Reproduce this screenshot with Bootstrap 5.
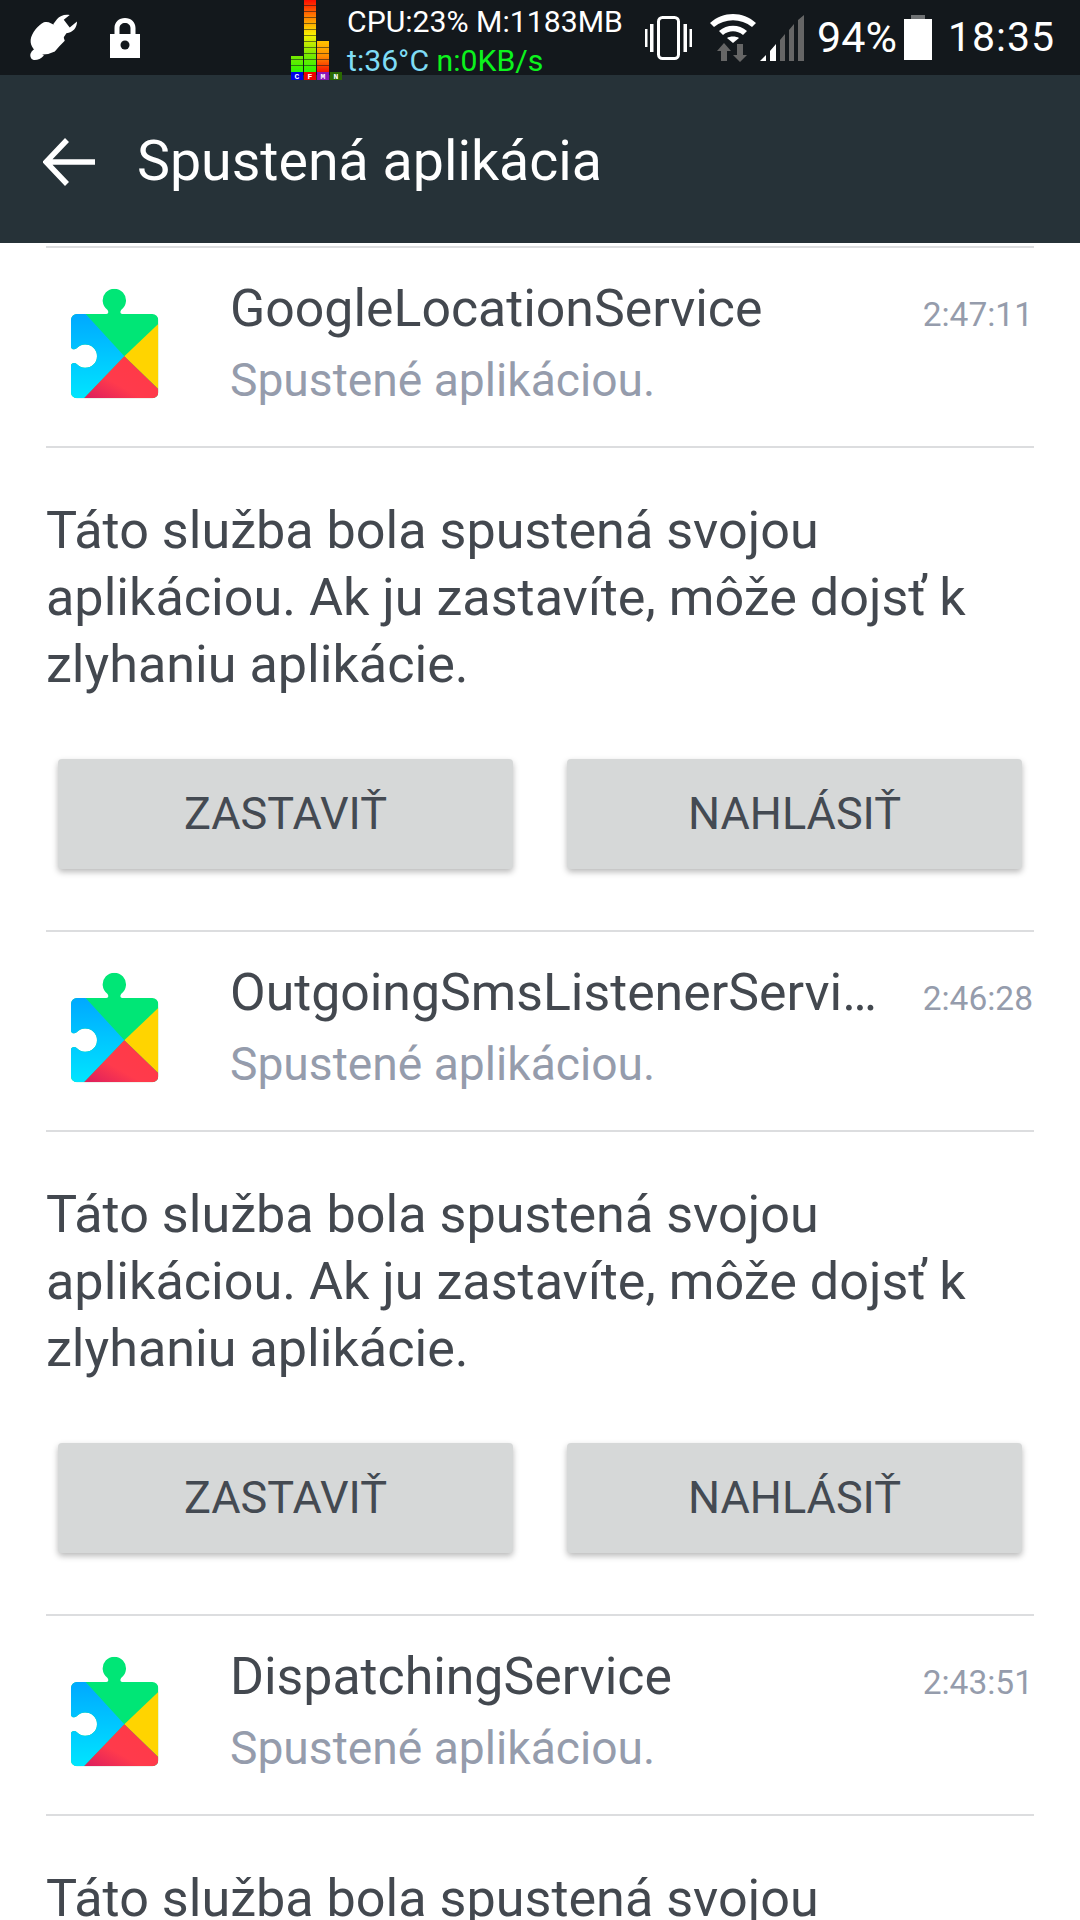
<!DOCTYPE html>
<html lang="sk">
<head>
<meta charset="utf-8">
<title>Spustená aplikácia</title>
<link rel="stylesheet" href="https://cdn.jsdelivr.net/npm/bootstrap@5.3.0/dist/css/bootstrap.min.css">
<style>
html,body{width:1080px;height:1920px;overflow:hidden;background:#fff}
body{font-family:Roboto,"Liberation Sans",sans-serif;color:#444a52}
.sbar{height:75px;background:#13181c;color:#fff;position:relative;padding-left:29px}
.sleft{gap:32px}
.eq{position:absolute;left:291px;top:0;width:52px;height:81px;z-index:2}
.stats{position:absolute;left:347px;top:2px;font-size:30.2px;line-height:39px;white-space:nowrap}
.tcol{color:#7fdcf5}.ncol{color:#0cf31c}
.sright{position:absolute;right:25px;top:0;height:75px}
.pct{font-size:43px;line-height:75px;margin-left:13px}
.clock{font-size:41px;line-height:75px;letter-spacing:1px;margin-left:15.5px}
.vib{margin-right:17.5px}
.sig{margin-left:4.5px}
.bat{margin-left:7.5px}
.abar{height:168px;background:#263238;color:#fff;padding:5px 0 0 43px}
.abar h1{font-size:55.5px;font-weight:400;margin:0 0 0 40px;line-height:1;color:#fff}
.screen{padding:3px 46px 0 46px}
.hr{height:2px;background:#dcdddf}
.srow{height:198px}
.ico{width:140px;height:150px;margin:20.5px 50px 0 -6px;flex:none;align-self:flex-start}
.smain{min-width:0;flex:1 1 auto;align-self:flex-start;padding-top:29px}
.sname{font-size:51.8px;line-height:64px;color:#43484f;white-space:nowrap}
.ssub{font-size:46.2px;line-height:56px;color:#959cac;margin-top:11px}
.stime{font-size:33.5px;color:#959cac;flex:none;align-self:flex-start;margin:47px 1px 0 42px;line-height:40px}
.desc{font-size:52.15px;line-height:67px;color:#43484f;margin:0;padding-top:49px}
.btnrow{padding:61px 12px 0;gap:54px}
.gbtn{flex:1 1 0;height:110px;background:#d6d8d8;border:0;border-radius:4px;font-size:45px;color:#444a52;box-shadow:0 3px 6px rgba(0,0,0,.28);padding:0}
.gap{height:61px}
</style>
</head>
<body>
<svg width="0" height="0" class="position-absolute">
<defs>
<clipPath id="pz"><path d="M111 135H199C205 135 207 128 202 122A35 35 0 1 1 244 122C239 128 241 135 247 135H337A18 18 0 0 1 355 153V370A18 18 0 0 1 337 388H111A18 18 0 0 1 93 370V290C93 282 104 280 110 285A35 35 0 1 0 110 238C104 243 93 241 93 233V153A18 18 0 0 1 111 135Z"/></clipPath>
<linearGradient id="gb" x1="0" y1="0" x2="0" y2="1"><stop offset="0" stop-color="#00a6ff"/><stop offset="1" stop-color="#00e6ff"/></linearGradient>
<linearGradient id="gr" x1="1" y1="0" x2="0" y2="1"><stop offset="0" stop-color="#ff3a44"/><stop offset=".6" stop-color="#ff3a4c"/><stop offset="1" stop-color="#d81b60"/></linearGradient>
<symbol id="puzzle" viewBox="0 0 420 450">
<g clip-path="url(#pz)">
<rect x="80" y="40" width="300" height="360" fill="#00e676"/>
<path d="M80 125H128L253 262L128 392H80Z" fill="url(#gb)"/>
<path d="M360 160V365L253 262Z" fill="#ffd400"/>
<path d="M253 262L360 365V392H128Z" fill="url(#gr)"/>
</g>
</symbol>
</defs>
</svg>

<div class="sbar">
<div class="d-flex align-items-center sleft h-100">
<svg width="49" height="48" viewBox="27 27 148 145"><path d="M32 105C34 85 55 60 72 52C85 48 95 55 105 62C118 70 128 82 135 108L118 125L105 140L85 148L62 150C45 140 30 125 32 105Z" fill="#fff"/><path d="M45 132L72 152C60 165 40 172 33 160C27 148 35 138 45 132Z" fill="#fff"/><path d="M100 58L112 42C120 32 135 27 150 30L132 44L150 68L172 50C172 68 160 84 140 85L130 100Z" fill="#fff"/></svg>
<svg width="30" height="40" viewBox="0 0 30 40"><path d="M4.500 16V10C4.500 4 9 0 15 0C21 0 25.500 4 25.500 10V16H30V40H0V16ZM9.500 16H20.500V10C20.500 7 18 5 15 5C12 5 9.500 7 9.500 10Z" fill="#fff" fill-rule="evenodd"/><circle cx="15" cy="27" r="4.500" fill="#13181c"/></svg>
</div>
<svg class="eq" viewBox="0 0 52 81">
<defs>
<linearGradient id="e1" x1="0" y1="0" x2="0" y2="1"><stop offset="0" stop-color="#ff0c00"/><stop offset=".22" stop-color="#ff7a00"/><stop offset=".48" stop-color="#f8f000"/><stop offset=".75" stop-color="#7ee800"/><stop offset="1" stop-color="#2af500"/></linearGradient>
<linearGradient id="e2" x1="0" y1="0" x2="0" y2="1"><stop offset="0" stop-color="#ffc400"/><stop offset=".5" stop-color="#ff8a00"/><stop offset="1" stop-color="#f81000"/></linearGradient>
<linearGradient id="e3" x1="0" y1="0" x2="0" y2="1"><stop offset="0" stop-color="#78e800"/><stop offset="1" stop-color="#2cf500"/></linearGradient>
</defs>
<rect x="0" y="56" width="12" height="16" fill="url(#e3)"/>
<rect x="13" y="0" width="12" height="72" fill="url(#e1)"/>
<rect x="26" y="41" width="12" height="31" fill="url(#e2)"/>
<path d="M0 59.500h12M0 65.500h12M13 5.500h12M13 11.500h12M13 17.500h12M13 23.500h12M13 29.500h12M13 35.500h12M13 41.500h12M13 47.500h12M13 53.500h12M13 59.500h12M13 65.500h12M26 47.500h12M26 53.500h12M26 59.500h12M26 65.500h12" stroke="#13181c" stroke-opacity=".55" stroke-width="1"/>
<rect x="0" y="72" width="12" height="8" fill="#0000e6"/><rect x="13" y="72" width="12" height="8" fill="#ee0000"/><rect x="26" y="72" width="12" height="8" fill="#8a18b8"/><rect x="39" y="72" width="12" height="8" fill="#2a6a00"/>
<g font-family="Liberation Mono, monospace" font-size="8" font-weight="700" fill="#fff" text-anchor="middle"><text x="6" y="79">C</text><text x="19" y="79">F</text><text x="32" y="79">M</text><text x="45" y="79">N</text></g>
</svg>
<div class="stats">CPU:23% M:1183MB<br><span class="tcol">t:36°C</span> <span class="ncol">n:0KB/s</span></div>
<div class="sright d-flex align-items-center">
<svg width="47" height="44" viewBox="0 0 47 44" class="vib"><rect x="13.500" y="1.500" width="20" height="41" rx="4" fill="none" stroke="#fff" stroke-width="3"/><path d="M5 8h3.500v28H5zM38.500 8H42v28h-3.500zM0 13h2.500v18H0zM44.500 13H47v18h-2.500z" fill="#fff"/></svg>
<svg width="46" height="48" viewBox="0 0 46 48"><path d="M0 9C13 -3 33 -3 46 9L42 13C31 4 15 4 4 13Z" fill="#fff"/><path d="M9 17C17 10 29 10 37 17L33 21C27 16 19 16 13 21Z" fill="#fff"/><path d="M17 24C20 22 26 22 29 24L23 29Z" fill="#fff"/><path d="M14 29l7 8h-4v10h-6V37H7ZM27 30h6v11h4l-7 7-7-7h4Z" fill="#666"/></svg>
<svg width="44" height="46" viewBox="0 0 44 46" class="sig"><path d="M0 46L6 40V46ZM10 36L16 29V46H10Z" fill="#fff"/><path d="M20 25L25 19V46H20ZM29 15L34 9V46H29ZM38 5L44 0V46H38Z" fill="#666"/></svg>
<span class="pct">94%</span>
<svg width="28" height="45" viewBox="0 0 28 45" class="bat"><path d="M7 0H21V4H7Z" fill="#6f7274"/><path d="M0 4H28V45H0Z" fill="#fff"/></svg>
<span class="clock">18:35</span>
</div>
</div>

<div class="abar d-flex align-items-center">
<svg width="54" height="50" viewBox="0 0 54 50"><path d="M24 3L3 25L24 47M3 25H52" fill="none" stroke="#fff" stroke-width="5.500"/></svg>
<h1>Spustená aplikácia</h1>
</div>

<div class="screen">
<div class="hr"></div>
<div class="d-flex align-items-center srow"><svg class="ico"><use href="#puzzle"/></svg><div class="smain"><div class="sname">GoogleLocationService</div><div class="ssub">Spustené aplikáciou.</div></div><div class="stime">2:47:11</div></div>
<div class="hr"></div>
<p class="desc">Táto služba bola spustená svojou aplikáciou. Ak ju zastavíte, môže dojsť k zlyhaniu aplikácie.</p>
<div class="d-flex btnrow"><button type="button" class="btn gbtn">ZASTAVIŤ</button><button type="button" class="btn gbtn">NAHLÁSIŤ</button></div>
<div class="gap"></div>
<div class="hr"></div>
<div class="d-flex align-items-center srow"><svg class="ico"><use href="#puzzle"/></svg><div class="smain"><div class="sname">OutgoingSmsListenerServi…</div><div class="ssub">Spustené aplikáciou.</div></div><div class="stime">2:46:28</div></div>
<div class="hr"></div>
<p class="desc">Táto služba bola spustená svojou aplikáciou. Ak ju zastavíte, môže dojsť k zlyhaniu aplikácie.</p>
<div class="d-flex btnrow"><button type="button" class="btn gbtn">ZASTAVIŤ</button><button type="button" class="btn gbtn">NAHLÁSIŤ</button></div>
<div class="gap"></div>
<div class="hr"></div>
<div class="d-flex align-items-center srow"><svg class="ico"><use href="#puzzle"/></svg><div class="smain"><div class="sname">DispatchingService</div><div class="ssub">Spustené aplikáciou.</div></div><div class="stime">2:43:51</div></div>
<div class="hr"></div>
<p class="desc">Táto služba bola spustená svojou aplikáciou. Ak ju zastavíte, môže dojsť k zlyhaniu aplikácie.</p>
</div>
<script src="https://cdn.jsdelivr.net/npm/bootstrap@5.3.0/dist/js/bootstrap.bundle.min.js"></script>
</body>
</html>
